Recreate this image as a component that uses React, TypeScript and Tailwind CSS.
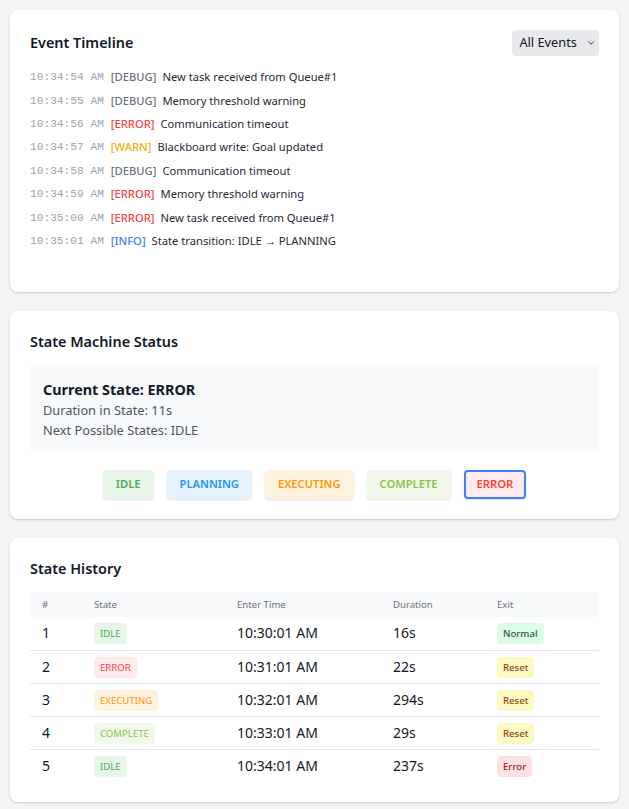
import { ChevronDown } from "lucide-react";

type Level = "DEBUG" | "ERROR" | "WARN" | "INFO";

const EVENTS: { time: string; level: Level; msg: string }[] = [
  { time: "10:34:54 AM", level: "DEBUG", msg: "New task received from Queue#1" },
  { time: "10:34:55 AM", level: "DEBUG", msg: "Memory threshold warning" },
  { time: "10:34:56 AM", level: "ERROR", msg: "Communication timeout" },
  { time: "10:34:57 AM", level: "WARN", msg: "Blackboard write: Goal updated" },
  { time: "10:34:58 AM", level: "DEBUG", msg: "Communication timeout" },
  { time: "10:34:59 AM", level: "ERROR", msg: "Memory threshold warning" },
  { time: "10:35:00 AM", level: "ERROR", msg: "New task received from Queue#1" },
  { time: "10:35:01 AM", level: "INFO", msg: "State transition: IDLE → PLANNING" },
];

const LEVEL_COLOR: Record<Level, string> = {
  DEBUG: "text-[#6b7280]",
  ERROR: "text-[#ef4444]",
  WARN: "text-[#eab308]",
  INFO: "text-[#3b82f6]",
};

const STATE_STYLE: Record<string, string> = {
  IDLE: "bg-[#e8f5e9] text-[#4caf50]",
  PLANNING: "bg-[#e3f2fd] text-[#2196f3]",
  EXECUTING: "bg-[#fff3e0] text-[#ff9800]",
  COMPLETE: "bg-[#f1f8e9] text-[#8bc34a]",
  ERROR: "bg-[#ffebee] text-[#f44336]",
};

const EXIT_STYLE: Record<string, string> = {
  Normal: "bg-[#dcfce7] text-[#166534]",
  Reset: "bg-[#fef9c3] text-[#854d0e]",
  Error: "bg-[#fee2e2] text-[#991b1b]",
};

const HISTORY = [
  { n: 1, state: "IDLE", enter: "10:30:01 AM", dur: "16s", exit: "Normal" },
  { n: 2, state: "ERROR", enter: "10:31:01 AM", dur: "22s", exit: "Reset" },
  { n: 3, state: "EXECUTING", enter: "10:32:01 AM", dur: "294s", exit: "Reset" },
  { n: 4, state: "COMPLETE", enter: "10:33:01 AM", dur: "29s", exit: "Reset" },
  { n: 5, state: "IDLE", enter: "10:34:01 AM", dur: "237s", exit: "Error" },
];

const STATES = ["IDLE", "PLANNING", "EXECUTING", "COMPLETE", "ERROR"];
const CURRENT = "ERROR";

function Card({ children }: { children: React.ReactNode }) {
  return (
    <div className="bg-white rounded-lg p-5 shadow-[0_1px_3px_rgba(0,0,0,0.12),0_1px_2px_rgba(0,0,0,0.06)]">
      {children}
    </div>
  );
}

export default function App() {
  return (
    <div className="min-h-screen bg-[#f3f4f6] p-[10px] flex flex-col gap-[19px] font-['Noto_Sans',sans-serif] text-[#111827]">
      <Card>
        <div className="flex items-center justify-between h-[26px]">
          <h2 className="text-[14.4px] font-semibold">Event Timeline</h2>
          <div className="flex items-center gap-[9px] bg-[#e9e9ed] rounded pl-[7px] pr-[3px] h-[26px] text-[12.8px]">
            <span>All Events</span>
            <ChevronDown size={10} strokeWidth={2} />
          </div>
        </div>
        <div className="h-[216px] pt-[10px] flex flex-col">
          {EVENTS.map((e, i) => (
            <div key={i} className="flex items-center h-[23.4px] text-[11.2px]">
              <span className="font-['Liberation_Mono',monospace] text-[#9ca3af] mr-[7px]">{e.time}</span>
              <span className={`font-medium mr-[6px] ${LEVEL_COLOR[e.level]}`}>[{e.level}]</span>
              <span className="text-[#1f2937]">{e.msg}</span>
            </div>
          ))}
        </div>
      </Card>

      <Card>
        <h2 className="text-[14.4px] font-semibold">State Machine Status</h2>
        <div className="mt-3 bg-[#f8f9fa] rounded px-[13px] pt-[15px] h-[86px]">
          <div className="text-[14.4px] font-bold leading-[20px]">Current State: ERROR</div>
          <div className="text-[12.8px] text-[#4b5563] leading-[20px]">Duration in State: 11s</div>
          <div className="text-[12.8px] text-[#4b5563] leading-[20px]">Next Possible States: IDLE</div>
        </div>
        <div className="mt-[19px] flex justify-center gap-[13px]">
          {STATES.map((s) => (
            <div
              key={s}
              className={`h-[29px] flex items-center px-[11px] rounded border-2 text-[11.2px] font-semibold shadow-[0_1px_2px_rgba(0,0,0,0.12)] ${STATE_STYLE[s]} ${
                s === CURRENT ? "border-[#3b82f6]" : "border-transparent"
              }`}
            >
              {s}
            </div>
          ))}
        </div>
      </Card>

      <Card>
        <h2 className="text-[14.4px] font-semibold">State History</h2>
        <table className="mt-[13px] w-full border-collapse table-fixed">
          <thead>
            <tr className="bg-[#f8f9fa] text-[9.6px] text-[#6b7280] text-left h-[25px]">
              <th className="font-normal pl-[12px] w-[52px]">#</th>
              <th className="font-normal pl-[12px] w-[143px]">State</th>
              <th className="font-normal pl-[12px] w-[156px]">Enter Time</th>
              <th className="font-normal pl-[12px] w-[104px]">Duration</th>
              <th className="font-normal pl-[12px]">Exit</th>
            </tr>
          </thead>
          <tbody>
            {HISTORY.map((h, i) => (
              <tr
                key={h.n}
                className={`h-[33px] text-sm text-[#111827] ${i < HISTORY.length - 1 ? "border-b border-[#e5e7eb]" : ""}`}
              >
                <td className="pl-[12px]">{h.n}</td>
                <td className="pl-[12px]">
                  <span className={`inline-block text-[9.6px] leading-[21px] px-[6px] rounded ${STATE_STYLE[h.state]}`}>
                    {h.state}
                  </span>
                </td>
                <td className="pl-[12px]">{h.enter}</td>
                <td className="pl-[12px]">{h.dur}</td>
                <td className="pl-[12px]">
                  <span className={`inline-block text-[9.6px] font-medium leading-[21px] px-[6px] rounded ${EXIT_STYLE[h.exit]}`}>
                    {h.exit}
                  </span>
                </td>
              </tr>
            ))}
          </tbody>
        </table>
      </Card>
    </div>
  );
}
